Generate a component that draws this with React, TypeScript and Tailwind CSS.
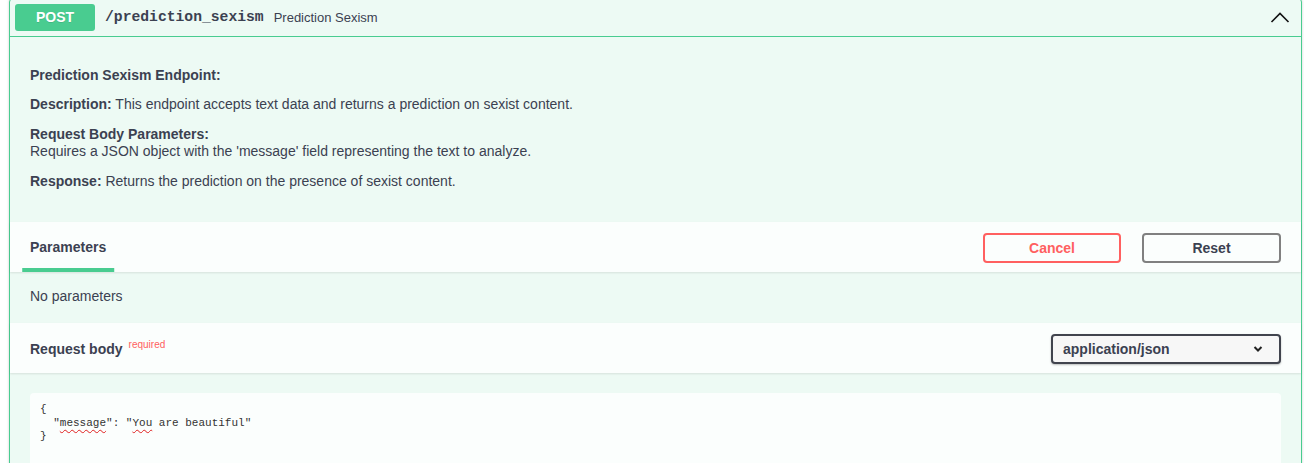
import React from 'react';

const ChevronUp = () => (
  <svg width="20" height="20" viewBox="0 0 20 20" className="mr-[6px]">
    <polyline points="1.5,14 10,5.5 18.5,14" fill="none" stroke="#111" strokeWidth="1.6" />
  </svg>
);

const ChevronDown = () => (
  <svg width="10" height="8" viewBox="0 0 10 8">
    <polyline points="1.5,2 5,5.5 8.5,2" fill="none" stroke="#222" strokeWidth="2" />
  </svg>
);

const mono = "font-['Liberation_Mono','DejaVu_Sans_Mono',monospace]";

const App = () => {
  return (
    <div className="h-[463px] overflow-hidden bg-white font-['Liberation_Sans',Arial,sans-serif] text-[#3b4151]">
      <div className="ml-[9px] mr-[2px] -mt-[2px] border border-[#49cc90] rounded-[4px] bg-[#edfaf4] shadow-[0_0_3px_rgba(0,0,0,0.19)]">
        {/* summary */}
        <div className="flex items-center p-[5px] border-b border-[#49cc90]">
          <div className="w-[80px] h-[27px] rounded-[3px] bg-[#49cc90] text-white text-[14px] font-bold flex items-center justify-center [text-shadow:0_1px_0_rgba(0,0,0,0.1)]">
            POST
          </div>
          <span className={`${mono} ml-[10px] text-[14.7px] font-bold`}>/prediction_sexism</span>
          <span className="ml-[10px] text-[13px]">Prediction Sexism</span>
          <div className="flex-1" />
          <ChevronUp />
        </div>

        {/* description */}
        <div className="h-[185px] px-5 pt-[30px] text-[14px] leading-[17px]">
          <p className="font-bold">Prediction Sexism Endpoint:</p>
          <p className="mt-[12px]">
            <b>Description:</b> This endpoint accepts text data and returns a prediction on sexist content.
          </p>
          <p className="mt-[13px]">
            <b>Request Body Parameters:</b>
            <br />
            Requires a JSON object with the 'message' field representing the text to analyze.
          </p>
          <p className="mt-[13px]">
            <b>Response:</b> Returns the prediction on the presence of sexist content.
          </p>
        </div>

        {/* parameters header */}
        <div className="h-[50px] px-5 flex items-center justify-between bg-white/80 shadow-[0_1px_2px_rgba(0,0,0,0.1)]">
          <div className="relative h-full flex items-center">
            <span className="text-[14px] font-bold mt-[1px]">Parameters</span>
            <span className="absolute bottom-0 left-1/2 -translate-x-1/2 w-[120%] h-[4px] bg-[#49cc90]" />
          </div>
          <div className="flex gap-[21px] mt-[2px]">
            <button className="w-[138px] h-[30px] border-2 border-[#ff6060] rounded-[4px] text-[#ff6060] text-[14px] font-bold bg-transparent">
              Cancel
            </button>
            <button className="w-[139px] h-[30px] border-2 border-[#808080] rounded-[4px] text-[#3b4151] text-[14px] font-bold bg-transparent">
              Reset
            </button>
          </div>
        </div>

        <div className="h-[51px] px-5 flex items-center text-[14px] pb-[2px]">No parameters</div>

        {/* request body header */}
        <div className="h-[50px] px-5 flex items-center justify-between bg-white/80 shadow-[0_1px_2px_rgba(0,0,0,0.1)]">
          <div className="flex items-start">
            <span className="text-[14px] font-bold mt-[2px]">Request body</span>
            <span className="ml-[6px] text-[10px] text-[#ff6060]">required</span>
          </div>
          <div className="mt-[2px] w-[230px] h-[30px] border-2 border-[#41444e] rounded-[4px] bg-[#f7f7f7] shadow-[0_1px_2px_rgba(0,0,0,0.25)] flex items-center justify-between pl-[10px] pr-[16px]">
            <span className="text-[14px] font-bold">application/json</span>
            <ChevronDown />
          </div>
        </div>

        {/* body */}
        <div className="px-5 pt-[20px] pb-[20px]">
          <div className={`${mono} h-[100px] rounded-[4px] bg-white/80 p-[10px] text-[11px] leading-[13.5px] text-[#333] whitespace-pre`}>
            <div>{'{'}</div>
            <div>
              {'  "'}
              <span className="underline decoration-wavy decoration-[#e02020] decoration-1 underline-offset-[3px]">message</span>
              {'": "'}
              <span className="underline decoration-wavy decoration-[#e02020] decoration-1 underline-offset-[3px]">You</span>
              {' are beautiful"'}
            </div>
            <div>{'}'}</div>
          </div>
        </div>
      </div>
    </div>
  );
};

export default App;
